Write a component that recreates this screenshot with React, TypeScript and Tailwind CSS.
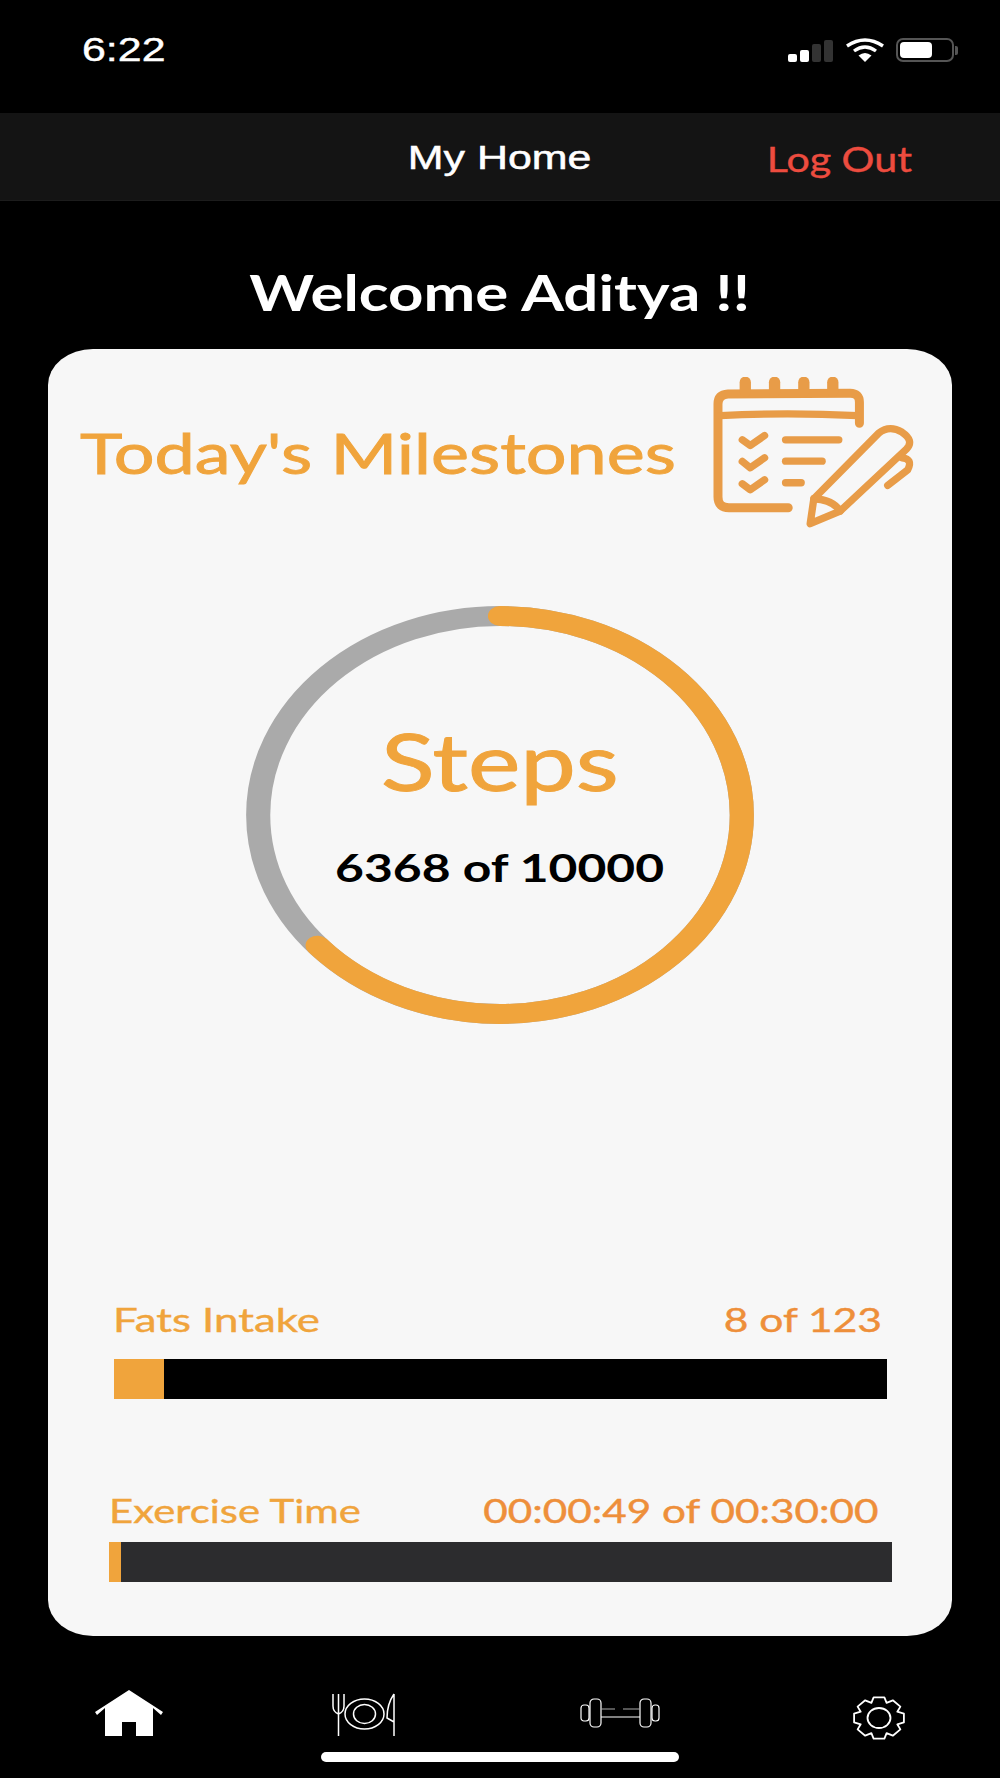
const gearPath = (() => {
  const teeth = 8;
  const pts: string[] = [];
  for (let i = 0; i < teeth; i++) {
    const a = (i / teeth) * Math.PI * 2 - Math.PI / 2;
    const step = (Math.PI * 2) / teeth;
    const spec: [number, number][] = [
      [-0.5, 0.76],
      [-0.27, 0.98],
      [0.27, 0.98],
      [0.5, 0.76],
    ];
    spec.forEach(([o, r]) => {
      const t = a + o * step;
      pts.push(`${(27 + 26 * r * Math.cos(t)).toFixed(1)} ${(22 + 21.5 * r * Math.sin(t)).toFixed(1)}`);
    });
  }
  return "M" + pts.join(" L") + " Z";
})();

function Stretch({ className, children }: { className: string; children: React.ReactNode }) {
  return <span className={"inline-block whitespace-nowrap " + className}>{children}</span>;
}

function PlannerIcon() {
  return (
    <svg viewBox="100 80 610 455" className="w-[203px] h-[152px] shrink-0" fill="none" stroke="#e89c48" strokeLinecap="round" strokeLinejoin="round">
      <g strokeWidth="27">
        <path d="M540 218 L540 155 Q540 128 512 128 L145 130 Q115 132 115 160 L115 440 Q115 472 148 472 L326 472" />
        <path d="M122 195 Q320 185 535 195" strokeWidth="22" />
      </g>
      <g strokeWidth="34">
        <path d="M197 95 L197 122" />
        <path d="M285 95 L285 122" />
        <path d="M373 95 L373 122" />
        <path d="M460 95 L460 122" />
      </g>
      <g strokeWidth="22">
        <path d="M188 268 L212 285 L255 255" />
        <path d="M188 333 L212 352 L255 322" />
        <path d="M188 400 L212 418 L255 388" />
        <path d="M318 268 L478 268" />
        <path d="M318 332 L428 332" />
        <path d="M318 397 L365 397" />
        <path d="M403 445 L598 248 Q630 222 668 245 Q705 270 682 295 L482 482 L392 520 Z" />
        <path d="M403 445 Q460 448 482 482" />
        <path d="M668 322 Q702 325 685 358 L625 405" />
      </g>
    </svg>
  );
}

function Bar({ label, value, track, px, valueClass, labelClass, pct, gap }: { label: string; value: string; track: string; px: string; valueClass: string; labelClass: string; pct: string; gap: string }) {
  return (
    <div className={"flex flex-col " + px}>
      <div className="flex justify-between items-end h-[32px] text-[32px] leading-[30px] text-[#f0a43c] font-['Lato',sans-serif] [-webkit-text-stroke:0.4px_#f0a43c]">
        <Stretch className={"origin-left " + labelClass}>{label}</Stretch>
        <Stretch className={"origin-right text-[#ee8f3a] [-webkit-text-stroke:0.4px_#ee8f3a] " + valueClass}>{value}</Stretch>
      </div>
      <div className={"h-[40px] " + gap + " " + track}>
        <div className={"h-full bg-[#f0a43c] " + pct} />
      </div>
    </div>
  );
}

export default function App() {
  return (
    <div className="relative w-[1000px] h-[1778px] bg-black flex flex-col overflow-hidden">
      {/* status bar */}
      <div className="h-[113px] flex items-start justify-between pl-[82px] pr-[42px] pt-[38px]">
        <Stretch className="origin-left scale-x-[1.3] text-white text-[33px] leading-[24px] font-['Liberation_Sans',sans-serif] [-webkit-text-stroke:0.4px_#ffffff]">6:22</Stretch>
        <div className="flex items-end gap-[12px] h-[24px]">
          <div className="flex items-end gap-[3px] h-[22px]">
            <div className="w-[9px] h-[8px] rounded-[2px] bg-white" />
            <div className="w-[9px] h-[12px] rounded-[2px] bg-white" />
            <div className="w-[9px] h-[18px] rounded-[2px] bg-[#333333]" />
            <div className="w-[9px] h-[22px] rounded-[2px] bg-[#333333]" />
          </div>
          <svg viewBox="0 0 40 24" className="w-[40px] h-[24px]" fill="none" stroke="#ffffff" strokeWidth="3.4">
            <path d="M2 8 Q20 -4 38 8" />
            <path d="M9 13 Q20 5 31 13" />
            <path d="M20 24 L13.5 17.5 Q20 12.5 26.5 17.5 Z" fill="#ffffff" stroke="none" />
          </svg>
          <div className="flex items-center">
            <div className="w-[58px] h-[24px] rounded-[7px] border-2 border-[#555555] p-[2px] -ml-[1px]">
              <div className="w-[32px] h-full rounded-[4px] bg-white" />
            </div>
            <div className="w-[3px] h-[9px] ml-[1px] rounded-r-[2px] bg-[#555555]" />
          </div>
        </div>
      </div>

      {/* nav bar */}
      <div className="relative h-[88px] bg-[#141414] border-b border-[#1c1c1c] flex items-center justify-center">
        <Stretch className="mt-[2px] scale-x-[1.3] text-white text-[33px] leading-[40px] font-['Liberation_Sans',sans-serif] [-webkit-text-stroke:0.5px_#ffffff]">My Home</Stretch>
        <Stretch className="absolute right-[88px] top-[26px] origin-right scale-x-[1.21] text-[#ed4c3f] text-[34px] leading-[40px] font-['Lato',sans-serif] [-webkit-text-stroke:0.4px_#ed4c3f]">Log Out</Stretch>
      </div>

      {/* welcome */}
      <div className="h-[148px] pt-[34px] flex items-center justify-center">
        <Stretch className="scale-x-[1.235] text-white text-[50px] leading-[56px] font-bold font-['Lato',sans-serif]">Welcome Aditya !!</Stretch>
      </div>

      {/* card */}
      <div className="mx-[48px] h-[1287px] bg-[#f7f7f7] rounded-[45px/36px] flex flex-col">
        <div className="flex items-center justify-between pl-[32px] pr-[36px] pt-[28px] h-[180px]">
          <Stretch className="origin-left scale-x-[1.285] text-[#f0a43c] text-[56px] leading-[64px] font-['Lato',sans-serif] [-webkit-text-stroke:0.9px_#f0a43c]">Today's Milestones</Stretch>
          <PlannerIcon />
        </div>

        <div className="relative mt-[77px] mx-auto w-[508px] h-[418px]">
          <svg viewBox="0 0 100 100" preserveAspectRatio="none" className="absolute inset-0 w-full h-full" fill="none">
            <circle cx="50" cy="50" r="47.6" stroke="#aaaaaa" strokeWidth="4.75" />
            <circle cx="50" cy="50" r="47.6" stroke="#f0a43c" strokeWidth="4.75" strokeLinecap="round" pathLength={100} strokeDasharray="63.68 100" transform="rotate(-90 50 50)" />
          </svg>
          <div className="relative h-full flex flex-col items-center pt-[109px]">
            <Stretch className="scale-x-[1.24] text-[#f0a43c] text-[80px] leading-[90px] font-['Lato',sans-serif] [-webkit-text-stroke:1px_#f0a43c]">Steps</Stretch>
            <Stretch className="mt-[40px] scale-x-[1.31] text-black text-[38px] leading-[44px] font-bold font-['Lato',sans-serif]">6368 of 10000</Stretch>
          </div>
        </div>

        <div className="mt-[279px]">
          <Bar label="Fats Intake" value="8 of 123" px="ml-[66px] mr-[65px]" track="bg-black" pct="w-[50px]" labelClass="scale-x-[1.37] -ml-[1px]" valueClass="scale-x-[1.33] mr-[5px]" gap="mt-[24px]" />
        </div>
        <div className="mt-[95px]">
          <Bar label="Exercise Time" value="00:00:49 of 00:30:00" px="ml-[61px] mr-[60px]" track="bg-[#2c2c2e]" pct="w-[12px]" labelClass="scale-x-[1.31]" valueClass="scale-x-[1.32] mr-[13px]" gap="mt-[16px]" />
        </div>
      </div>

      {/* tab bar */}
      <div className="flex-1 relative flex items-start pl-[95px] pt-[54px]">
        <svg viewBox="0 0 68 46" className="w-[68px] h-[46px]" fill="#ffffff">
          <path d="M34 0 L68 22 L66 25 L58 18 L58 46 L41 46 L41 32 L27 32 L27 46 L10 46 L10 18 L2 25 L0 22 Z" />
        </svg>
        <svg viewBox="0 0 66 46" className="ml-[168px] w-[66px] h-[46px] mt-[2px]" fill="none" stroke="#ffffff" strokeWidth="1.5">
          <path d="M2 2 L2 14 Q2 20 7.5 22 L7.5 44 M7.5 2 L7.5 22 M13 2 L13 14 Q13 20 7.5 22" />
          <ellipse cx="33.5" cy="22" rx="19.5" ry="15" />
          <ellipse cx="33.5" cy="22" rx="11" ry="9.5" />
          <path d="M63 2 L63 44 M63 2 Q56 12 56 26 L63 30" />
        </svg>
        <svg viewBox="0 0 80 30" className="ml-[183px] w-[80px] h-[30px] mt-[8px]" fill="none" stroke="#ffffff" strokeWidth="1.2">
          <rect x="1" y="7" width="8" height="16" rx="3" />
          <rect x="10" y="1" width="11" height="28" rx="4" />
          <rect x="60" y="1" width="11" height="28" rx="4" />
          <rect x="72" y="7" width="7" height="16" rx="3" />
          <path d="M21 11 L35 11 M43 11 L60 11" stroke="#aaaaaa" />
          <path d="M21 19 L60 19" />
        </svg>
        <svg viewBox="0 0 54 44" className="ml-[192px] w-[54px] h-[44px] mt-[6px]" fill="none" stroke="#ffffff" strokeWidth="1.8">
          <path d={gearPath} strokeLinejoin="round" />
          <ellipse cx="27" cy="22" rx="11.5" ry="10" />
        </svg>
        <div className="absolute left-[321px] top-[116px] w-[358px] h-[10px] rounded-full bg-white" />
      </div>
    </div>
  );
}
